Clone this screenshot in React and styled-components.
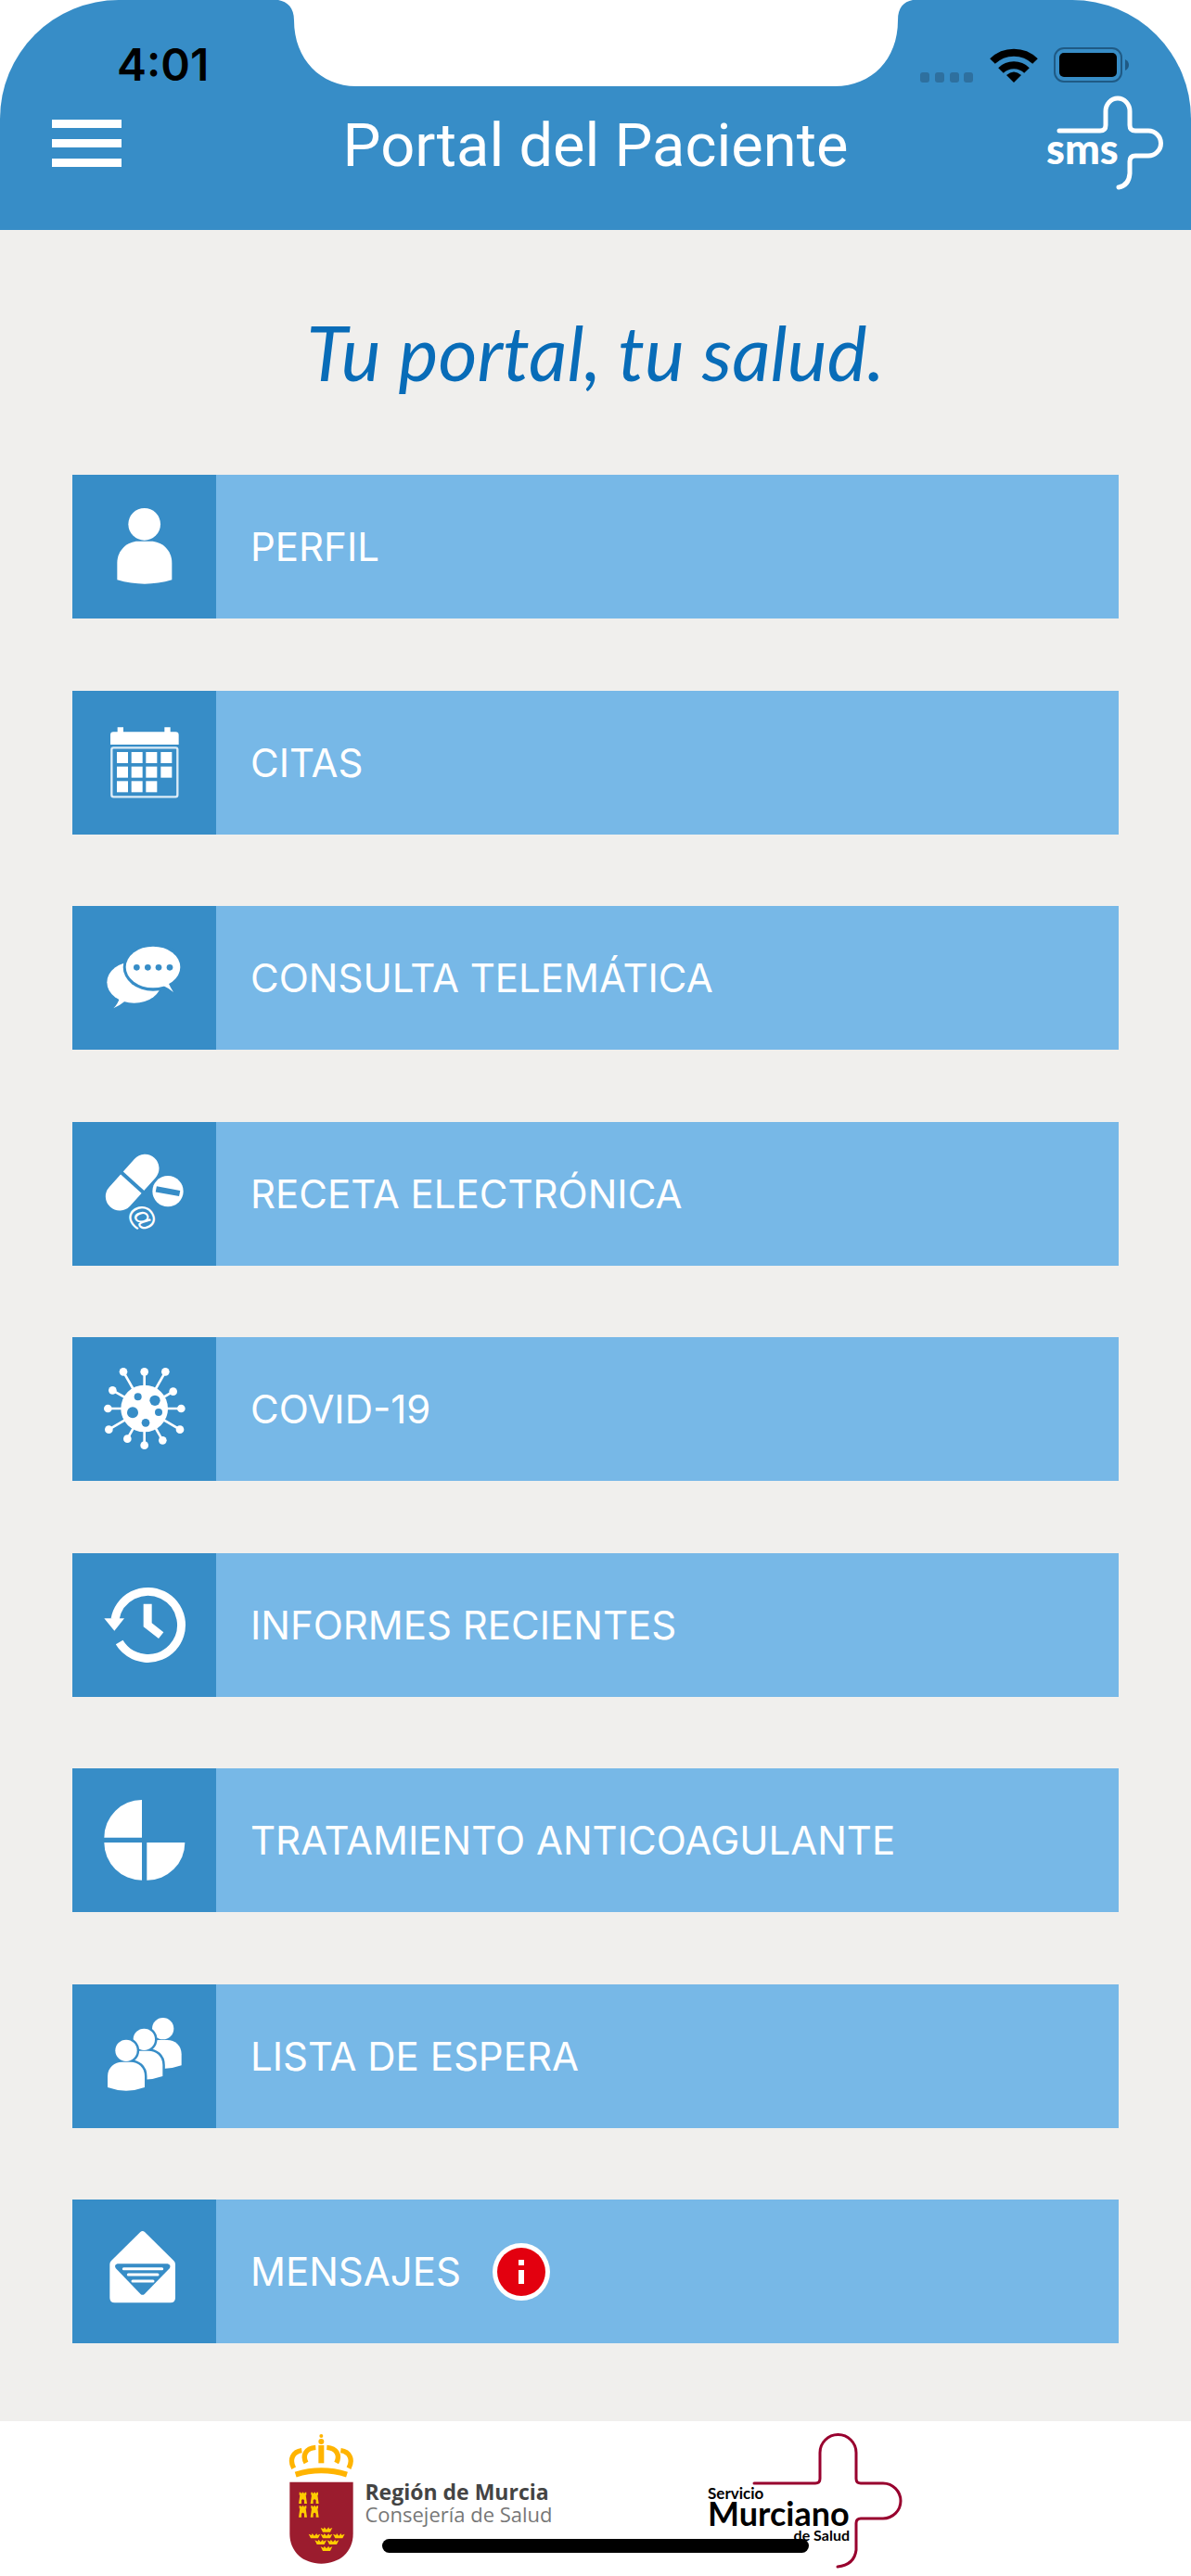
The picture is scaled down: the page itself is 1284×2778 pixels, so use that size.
import React from "react";
import styled, { createGlobalStyle } from "styled-components";

const colors = {
  blue: "#378dc7",
  lightBlue: "#77b8e7",
  ink: "#086cb8",
  page: "#f0efed",
  white: "#ffffff",
  black: "#000000",
  alert: "#e3000f",
  crimson: "#9b1c2e",
  logoRed: "#98002e",
  gold: "#ffb400",
  yellow: "#ffcc00",
};

const GlobalStyle = createGlobalStyle`
  * {
    box-sizing: border-box;
  }

  body {
    margin: 0;
    background: ${colors.white};
    font-family: Inter, "Liberation Sans", sans-serif;
  }
`;

const Screen = styled.div`
  display: flex;
  flex-direction: column;
  min-height: 100vh;
  position: relative;
`;

const Header = styled.header`
  position: relative;
  background: ${colors.blue};
  border-radius: 128px 128px 0 0;
`;

const Notch = styled.svg`
  position: absolute;
  top: 0;
  left: 50%;
  width: 684px;
  height: 93px;
  transform: translateX(-50%);
`;

const StatusBar = styled.div`
  display: flex;
  justify-content: space-between;
  align-items: center;
  height: 100px;
  padding: 40px 66px 0 126px;
`;

const Time = styled.time`
  font-size: 48px;
  line-height: 60px;
  font-weight: 600;
  color: ${colors.black};
`;

const StatusIcons = styled.div`
  display: flex;
  align-items: center;
  gap: 17px;
`;

const Toolbar = styled.div`
  display: grid;
  grid-template-columns: 1fr auto 1fr;
  align-items: center;
  height: 148px;
  padding: 0 28px 40px;
`;

const MenuButton = styled.button`
  display: flex;
  flex-direction: column;
  gap: 12px;
  width: 75px;
  margin-left: 28px;
  padding: 0;
  border: none;
  background: none;
  cursor: pointer;
`;

const MenuBar = styled.span`
  height: 9px;
  background: ${colors.white};
`;

const Title = styled.h1`
  margin: 0;
  padding-top: 6px;
  font-family: Roboto, "Liberation Sans", sans-serif;
  font-size: 65px;
  line-height: 80px;
  font-weight: 400;
  color: ${colors.white};
`;

const HeaderLogo = styled.a`
  display: flex;
  justify-self: end;
`;

const Main = styled.main`
  flex: 1;
  display: flex;
  flex-direction: column;
  padding: 0 78px 84px;
  background: ${colors.page};
`;

const Slogan = styled.p`
  margin: 0;
  padding: 82px 0;
  text-align: center;
  font-family: Lato, sans-serif;
  font-style: italic;
  font-size: 81px;
  line-height: 100px;
  color: ${colors.ink};
`;

const MenuList = styled.ul`
  flex: 1;
  display: flex;
  flex-direction: column;
  justify-content: space-between;
  margin: 0;
  padding: 0;
  list-style: none;
`;

const MenuItem = styled.button`
  display: flex;
  align-items: center;
  width: 100%;
  padding: 0;
  border: none;
  background: ${colors.lightBlue};
  color: ${colors.white};
  font-family: inherit;
  font-size: 42px;
  font-weight: 400;
  text-align: left;
  cursor: pointer;
`;

const IconTile = styled.svg`
  flex: none;
  width: 155px;
  height: 155px;
  background: ${colors.blue};
  fill: ${colors.white};
`;

const Label = styled.span`
  padding-left: 37px;
`;

const Badge = styled.svg`
  width: 62px;
  height: 62px;
  margin-left: 34px;
`;

const Footer = styled.footer`
  display: flex;
  justify-content: center;
  gap: 167px;
  height: 167px;
  padding-top: 13px;
  background: ${colors.white};
`;

const RegionLink = styled.a`
  display: flex;
  align-items: flex-start;
  gap: 11px;
  text-decoration: none;
`;

const RegionText = styled.span`
  display: flex;
  flex-direction: column;
  padding-top: 51px;
  font-family: "Open Sans", sans-serif;
  font-size: 22px;
  line-height: 24px;
  color: #777777;

  strong {
    color: #444444;
    font-size: 23px;
    font-weight: 700;
  }
`;

const HomeIndicator = styled.div`
  position: absolute;
  left: 50%;
  bottom: 25px;
  width: 460px;
  height: 15px;
  border-radius: 8px;
  background: ${colors.black};
  transform: translateX(-50%);
`;

/* tile icons, all drawn on a 465 x 465 grid */

const ProfileIcon = () => (
  <>
    <circle cx="233" cy="160" r="52" />
    <path d="M145 340 V285 C145 242 180 215 212 215 H254 C288 215 322 242 322 285 V340 Q234 366 145 340 Z" />
  </>
);

const CalendarIcon = () => (
  <>
    <path d="M123 174 V143 Q123 133 133 133 H146 V118 H165 V133 H298 V118 H317 V133 H334 Q344 133 344 143 V174 Z" />
    <rect x="127" y="184" width="213" height="159" rx="6" fill="none" stroke="#dcecf7" strokeWidth="7" />
    {[198, 245, 292].map((y, row) =>
      [144, 191, 238, 286]
        .slice(0, row === 2 ? 3 : 4)
        .map((x) => <rect key={`${x}-${y}`} x={x} y={y} width="36" height="36" />)
    )}
  </>
);

const ChatIcon = () => (
  <>
    <ellipse cx="200" cy="247" rx="88" ry="67" />
    <path d="M153 298 Q147 318 133 331 Q150 324 170 308 Z" />
    <ellipse cx="261" cy="198" rx="97" ry="77" fill={colors.blue} />
    <ellipse cx="261" cy="198" rx="88" ry="67" />
    <path d="M294 258 Q312 266 327 279 Q318 266 311 250 Z" />
    {[208, 244, 279, 315].map((x) => (
      <circle key={x} cx={x} cy="199" r="10" fill={colors.blue} />
    ))}
  </>
);

const PillsIcon = () => (
  <>
    <line x1="235" y1="150" x2="153" y2="241" stroke={colors.white} strokeWidth="91" strokeLinecap="round" />
    <line x1="158" y1="163" x2="230" y2="228" stroke={colors.blue} strokeWidth="12" />
    <circle cx="309" cy="224" r="50" />
    <line x1="271" y1="217" x2="347" y2="231" stroke={colors.blue} strokeWidth="19" />
    <text
      x="231"
      y="307"
      transform="rotate(60 231 307)"
      textAnchor="middle"
      dominantBaseline="central"
      fontFamily="Liberation Sans, sans-serif"
      fontWeight="700"
      fontSize="90"
    >
      @
    </text>
  </>
);

const spikes = [
  [165, 112],
  [233, 112],
  [301, 112],
  [130, 172],
  [326, 176],
  [115, 231],
  [352, 231],
  [118, 299],
  [348, 299],
  [178, 329],
  [233, 350],
  [292, 334],
];

const VirusIcon = () => (
  <>
    {spikes.map(([x, y]) => (
      <g key={`${x}-${y}`}>
        <line x1="233" y1="231" x2={x} y2={y} stroke={colors.white} strokeWidth="8" />
        <circle cx={x} cy={y} r="13" />
      </g>
    ))}
    <circle cx="233" cy="231" r="76" />
    <g fill={colors.blue}>
      <circle cx="212" cy="193" r="12" />
      <circle cx="267" cy="205" r="17" />
      <circle cx="195" cy="244" r="18" />
      <circle cx="279" cy="243" r="12" />
      <circle cx="237" cy="277" r="13" />
    </g>
  </>
);

const HistoryIcon = () => (
  <>
    <path d="M138 214 A108 108 0 1 1 152 288" fill="none" stroke={colors.white} strokeWidth="27" />
    <path d="M103 211 H168 L136 251 Z" />
    <path d="M230 164 H257 V226 L295 256 L279 276 L230 238 Z" />
  </>
);

const PieIcon = () => (
  <>
    <path d="M225 102 V224 H103 A122 122 0 0 1 225 102 Z" />
    <path d="M103 240 H225 V362 A122 122 0 0 1 103 240 Z" />
    <path d="M241 240 H364 A122 122 0 0 1 241 362 Z" />
  </>
);

const personBody = "M114 333 V297 C114 268 138 251 160 251 H188 C212 251 234 268 234 297 V333 Q174 355 114 333 Z";

const PeopleIcon = () => (
  <>
    {[
      [119, -71],
      [58, -36],
      [0, 0],
    ].map(([x, y]) => (
      <g key={x} transform={`translate(${x} ${y})`}>
        <g stroke={colors.blue} strokeWidth="15">
          <path d={personBody} />
          <circle cx="174" cy="214" r="35" />
        </g>
        <path d={personBody} />
        <circle cx="174" cy="214" r="35" />
      </g>
    ))}
  </>
);

const EnvelopeIcon = () => (
  <>
    <path d="M121 210 Q121 203 126 198 L220 105 Q227 99 234 105 L328 198 Q333 203 333 210 V318 Q333 334 317 334 H137 Q121 334 121 318 Z" />
    <path
      d="M146 208 H308 Q320 211 315 222 L234 305 Q227 312 220 305 L140 222 Q134 211 146 208 Z"
      fill={colors.blue}
    />
    <g stroke={colors.white} strokeWidth="9" strokeLinecap="round">
      <line x1="166" y1="224" x2="290" y2="224" />
      <line x1="181" y1="243" x2="276" y2="243" />
      <line x1="195" y1="264" x2="261" y2="264" />
    </g>
  </>
);

const SmsLogo = () => (
  <svg width="130" height="106" viewBox="0 0 130 106">
    <path
      d="M16 40 H60 Q66 40 66 34 V19 A13 14 0 0 1 92 19 V34 Q92 40 98 40 H112 A13 13 0 0 1 112 67 H98 Q92 67 92 73 V86 Q91 99 80 101"
      fill="none"
      stroke={colors.white}
      strokeWidth="5"
      strokeLinecap="round"
    />
    <text x="2" y="76" fill={colors.white} fontFamily="Lato, sans-serif" fontWeight="900" fontSize="45">
      sms
    </text>
  </svg>
);

const castles = [
  [33, 191],
  [71, 191],
  [33, 235],
  [71, 235],
];

const smallCrowns = [
  [123, 306],
  [84, 326],
  [123, 326],
  [163, 326],
  [104, 346],
  [144, 346],
  [123, 367],
];

const Crest = () => (
  <svg width="71" height="142" viewBox="0 0 213 426">
    <g fill="none" stroke={colors.gold} strokeWidth="16">
      <path d="M17 113 C2 85 14 60 43 56" />
      <path d="M57 96 C44 72 56 48 88 46" />
      <path d="M195 113 C210 85 198 60 169 56" />
      <path d="M155 96 C168 72 156 48 124 46" />
      <path d="M23 134 Q106 108 189 134" strokeWidth="18" />
      <path d="M106 39 V97" strokeWidth="18" />
    </g>
    <circle cx="106" cy="9" r="6" fill={colors.gold} />
    <circle cx="106" cy="27" r="9" fill={colors.gold} />
    <path d="M4 158 H209 V325 C209 385 165 422 106 422 C48 422 4 385 4 325 Z" fill={colors.crimson} />
    <g fill={colors.yellow}>
      {castles.map(([x, y]) => (
        <path
          key={`${x}-${y}`}
          transform={`translate(${x} ${y})`}
          d="M2 0 H7 V3 H11 V0 H16 V3 H20 V0 H25 V9 H23 L27 37 H18 V26 Q13 19 9 26 V37 H0 L4 9 H2 Z"
        />
      ))}
      {smallCrowns.map(([x, y]) => (
        <path
          key={`${x}-${y}`}
          transform={`translate(${x} ${y})`}
          d="M-19 0 L-9 4 L-7 -2 L0 6 L7 -2 L9 4 L19 0 L12 14 H-12 Z"
        />
      ))}
    </g>
  </svg>
);

const ServicioLogo = () => (
  <svg width="210" height="152" viewBox="0 0 210 152">
    <path
      d="M50 54 H116 Q121 54 121 49 V21 A19 19 0 0 1 160 21 V49 Q160 54 165 54 H189 A19 19 0 0 1 189 92 H165 Q160 92 160 97 V126 Q158 142 140 144"
      fill="none"
      stroke={colors.logoRed}
      strokeWidth="3"
      strokeLinecap="round"
    />
    <g fontFamily="Lato, sans-serif" fontWeight="700" fill={colors.black}>
      <text x="0" y="71" fontSize="17">
        Servicio
      </text>
      <text x="0" y="100" fontSize="36">
        Murciano
      </text>
      <text x="153" y="116" fontSize="16" textAnchor="end">
        de Salud
      </text>
    </g>
  </svg>
);

const items = [
  { label: "PERFIL", Icon: ProfileIcon },
  { label: "CITAS", Icon: CalendarIcon },
  { label: "CONSULTA TELEMÁTICA", Icon: ChatIcon },
  { label: "RECETA ELECTRÓNICA", Icon: PillsIcon },
  { label: "COVID-19", Icon: VirusIcon },
  { label: "INFORMES RECIENTES", Icon: HistoryIcon },
  { label: "TRATAMIENTO ANTICOAGULANTE", Icon: PieIcon },
  { label: "LISTA DE ESPERA", Icon: PeopleIcon },
  { label: "MENSAJES", Icon: EnvelopeIcon, alert: true },
];

const App = () => {
  return (
    <Screen>
      <GlobalStyle />
      <Header>
        <Notch viewBox="0 0 684 93" fill={colors.white}>
          <path d="M0 0 H684 C674 2 668 8 668 22 C668 64 640 93 600 93 H84 C46 93 17 64 17 22 C17 8 10 2 0 0 Z" />
        </Notch>
        <StatusBar>
          <Time>4:01</Time>
          <StatusIcons>
            <svg width="58" height="38" viewBox="0 0 58 38" fill="#2e709f">
              {[0, 16, 32, 47].map((x) => (
                <rect key={x} x={x} y="27" width="10" height="11" rx="3" />
              ))}
            </svg>
            <svg width="52" height="38" viewBox="0 0 52 38">
              <g fill="none" stroke={colors.black} strokeWidth="8">
                <path d="M3 15 A33 33 0 0 1 49 15" />
                <path d="M12 25 A20 20 0 0 1 40 25" />
              </g>
              <path d="M26 38 L18 30 Q26 23 34 30 Z" />
            </svg>
            <svg width="82" height="38" viewBox="0 0 82 38">
              <rect x="1" y="1" width="72" height="36" rx="10" fill="none" stroke="#1f5a85" strokeWidth="2" />
              <rect x="6" y="6" width="62" height="26" rx="5" />
              <path d="M77 13 Q81 15 81 19 Q81 23 77 25 Z" fill="#1f5a85" />
            </svg>
          </StatusIcons>
        </StatusBar>
        <Toolbar>
          <MenuButton aria-label="Menú">
            <MenuBar />
            <MenuBar />
            <MenuBar />
          </MenuButton>
          <Title>Portal del Paciente</Title>
          <HeaderLogo href="#sms" aria-label="SMS">
            <SmsLogo />
          </HeaderLogo>
        </Toolbar>
      </Header>

      <Main>
        <Slogan>Tu portal, tu salud.</Slogan>
        <MenuList>
          {items.map(({ label, Icon, alert }) => (
            <li key={label}>
              <MenuItem>
                <IconTile viewBox="0 0 465 465">
                  <Icon />
                </IconTile>
                <Label>{label}</Label>
                {alert && (
                  <Badge viewBox="0 0 62 62">
                    <circle cx="31" cy="31" r="31" fill={colors.white} />
                    <circle cx="31" cy="31" r="26" fill={colors.alert} />
                    <path d="M28 18 H34 V24 H28 Z M28 29 H34 V44 H28 Z" fill={colors.white} />
                  </Badge>
                )}
              </MenuItem>
            </li>
          ))}
        </MenuList>
      </Main>

      <Footer>
        <RegionLink href="#region">
          <Crest />
          <RegionText>
            <strong>Región de Murcia</strong>
            Consejería de Salud
          </RegionText>
        </RegionLink>
        <a href="#servicio" aria-label="Servicio Murciano de Salud">
          <ServicioLogo />
        </a>
      </Footer>
      <HomeIndicator />
    </Screen>
  );
};

export default App;
